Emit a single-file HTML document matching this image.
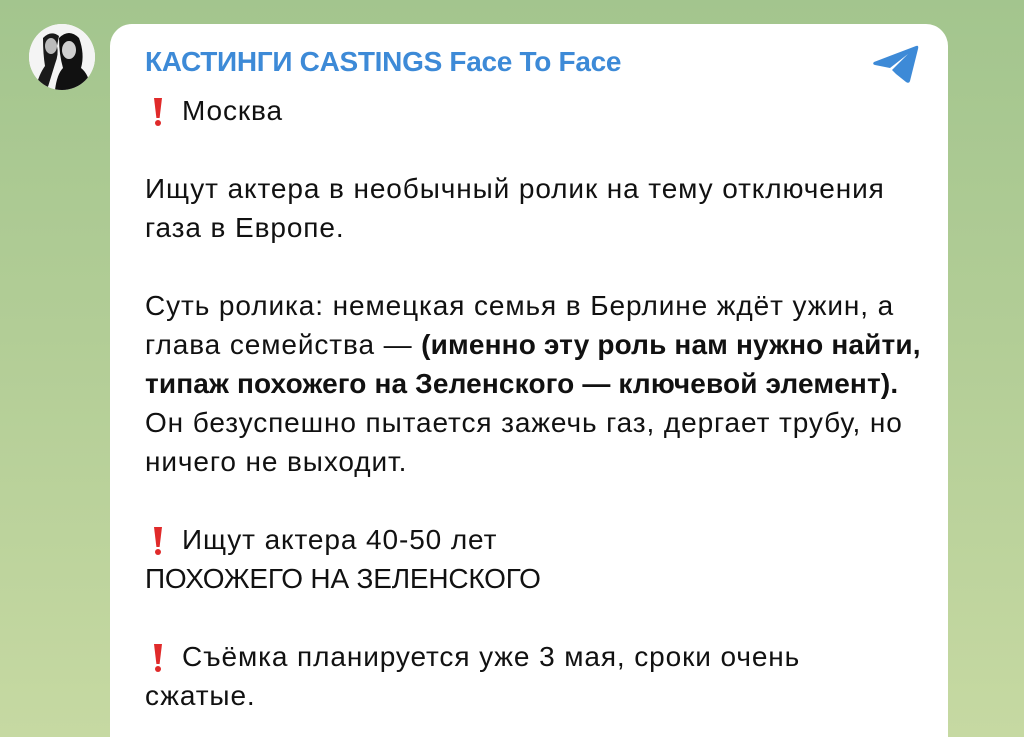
<!DOCTYPE html>
<html><head><meta charset="utf-8"><style>
html{background:#c6d9a2;}
html,body{margin:0;padding:0;}
body{width:1024px;height:737px;overflow:hidden;position:relative;
background:linear-gradient(180deg,#a3c58e 0%,#b2cd96 45%,#c6d9a2 100%);
font-family:"Liberation Sans","Noto Sans CJK SC",sans-serif;}
.av{position:absolute;left:29px;top:24px;width:66px;height:66px;border-radius:50%;background:#fff;overflow:hidden;}
.bub{position:absolute;left:110px;top:24px;width:838px;height:713px;background:#fff;border-radius:22px 22px 0 0;}
.title{position:absolute;left:145px;top:46px;font-size:28px;font-weight:bold;color:#3d8ad7;letter-spacing:-0.3px;}
.txt{position:absolute;left:145px;top:91px;font-size:28px;line-height:39px;color:#111;letter-spacing:0.9px;white-space:nowrap;}
.ex{display:inline-block;width:37px;position:relative;height:20px;}
.ex i{position:absolute;left:9px;top:-2px;width:8px;height:20px;background:#e02a2a;clip-path:polygon(0 0,100% 0,70% 100%,30% 100%);}
.ex b{position:absolute;left:10px;top:20px;width:6px;height:6px;border-radius:50%;background:#e02a2a;}
</style></head><body>
<div class="av"><svg width="66" height="66" viewBox="0 0 66 66">
<rect width="66" height="66" fill="#f4f4f4"/>
<path d="M14 14 Q22 6 30 12 L28 22 Q30 30 26 40 L18 66 L6 66 Q10 50 16 42 Q14 30 14 14Z" fill="#1a1a1a"/>
<path d="M30 14 Q40 4 50 14 Q56 30 52 44 Q60 50 62 66 L26 66 Q28 50 34 44 Q30 30 30 14Z" fill="#111"/>
<ellipse cx="40" cy="26" rx="7" ry="9" fill="#cfcfcf"/>
<ellipse cx="22" cy="22" rx="6" ry="8" fill="#bbb"/>
</svg></div>
<div class="bub"></div>
<div class="title">КАСТИНГИ CASTINGS Face To Face</div>
<svg style="position:absolute;left:872px;top:44px" width="48" height="40" viewBox="0 0 48 40">
<path d="M2 18 L44 2 Q47 1 46 5 L38 37 Q37 40 34 38 L24 30 L20 26 Q32 14 36 10 L18 24 L3 21 Q0 20 2 18Z" fill="#3d8ad7"/>
</svg>
<div class="txt">
<span class="ex"><i></i><b></b></span>Москва<br><br>
Ищут актера в необычный ролик на тему отключения<br>газа в Европе.<br><br>
Суть ролика: немецкая семья в Берлине ждёт ужин, а<br>глава семейства — <b style="letter-spacing:0.15px">(именно эту роль нам нужно найти,<br><span style="letter-spacing:0.15px">типаж похожего на Зеленского — ключевой элемент).</span></b><br>Он безуспешно пытается зажечь газ, дергает трубу, но<br>ничего не выходит.<br><br>
<span class="ex"><i></i><b></b></span>Ищут актера 40-50 лет<br><span style="letter-spacing:-0.2px">ПОХОЖЕГО НА ЗЕЛЕНСКОГО</span><br><br>
<span class="ex"><i></i><b></b></span>Съёмка планируется уже 3 мая, сроки очень<br>сжатые.
</div>
</body></html>
